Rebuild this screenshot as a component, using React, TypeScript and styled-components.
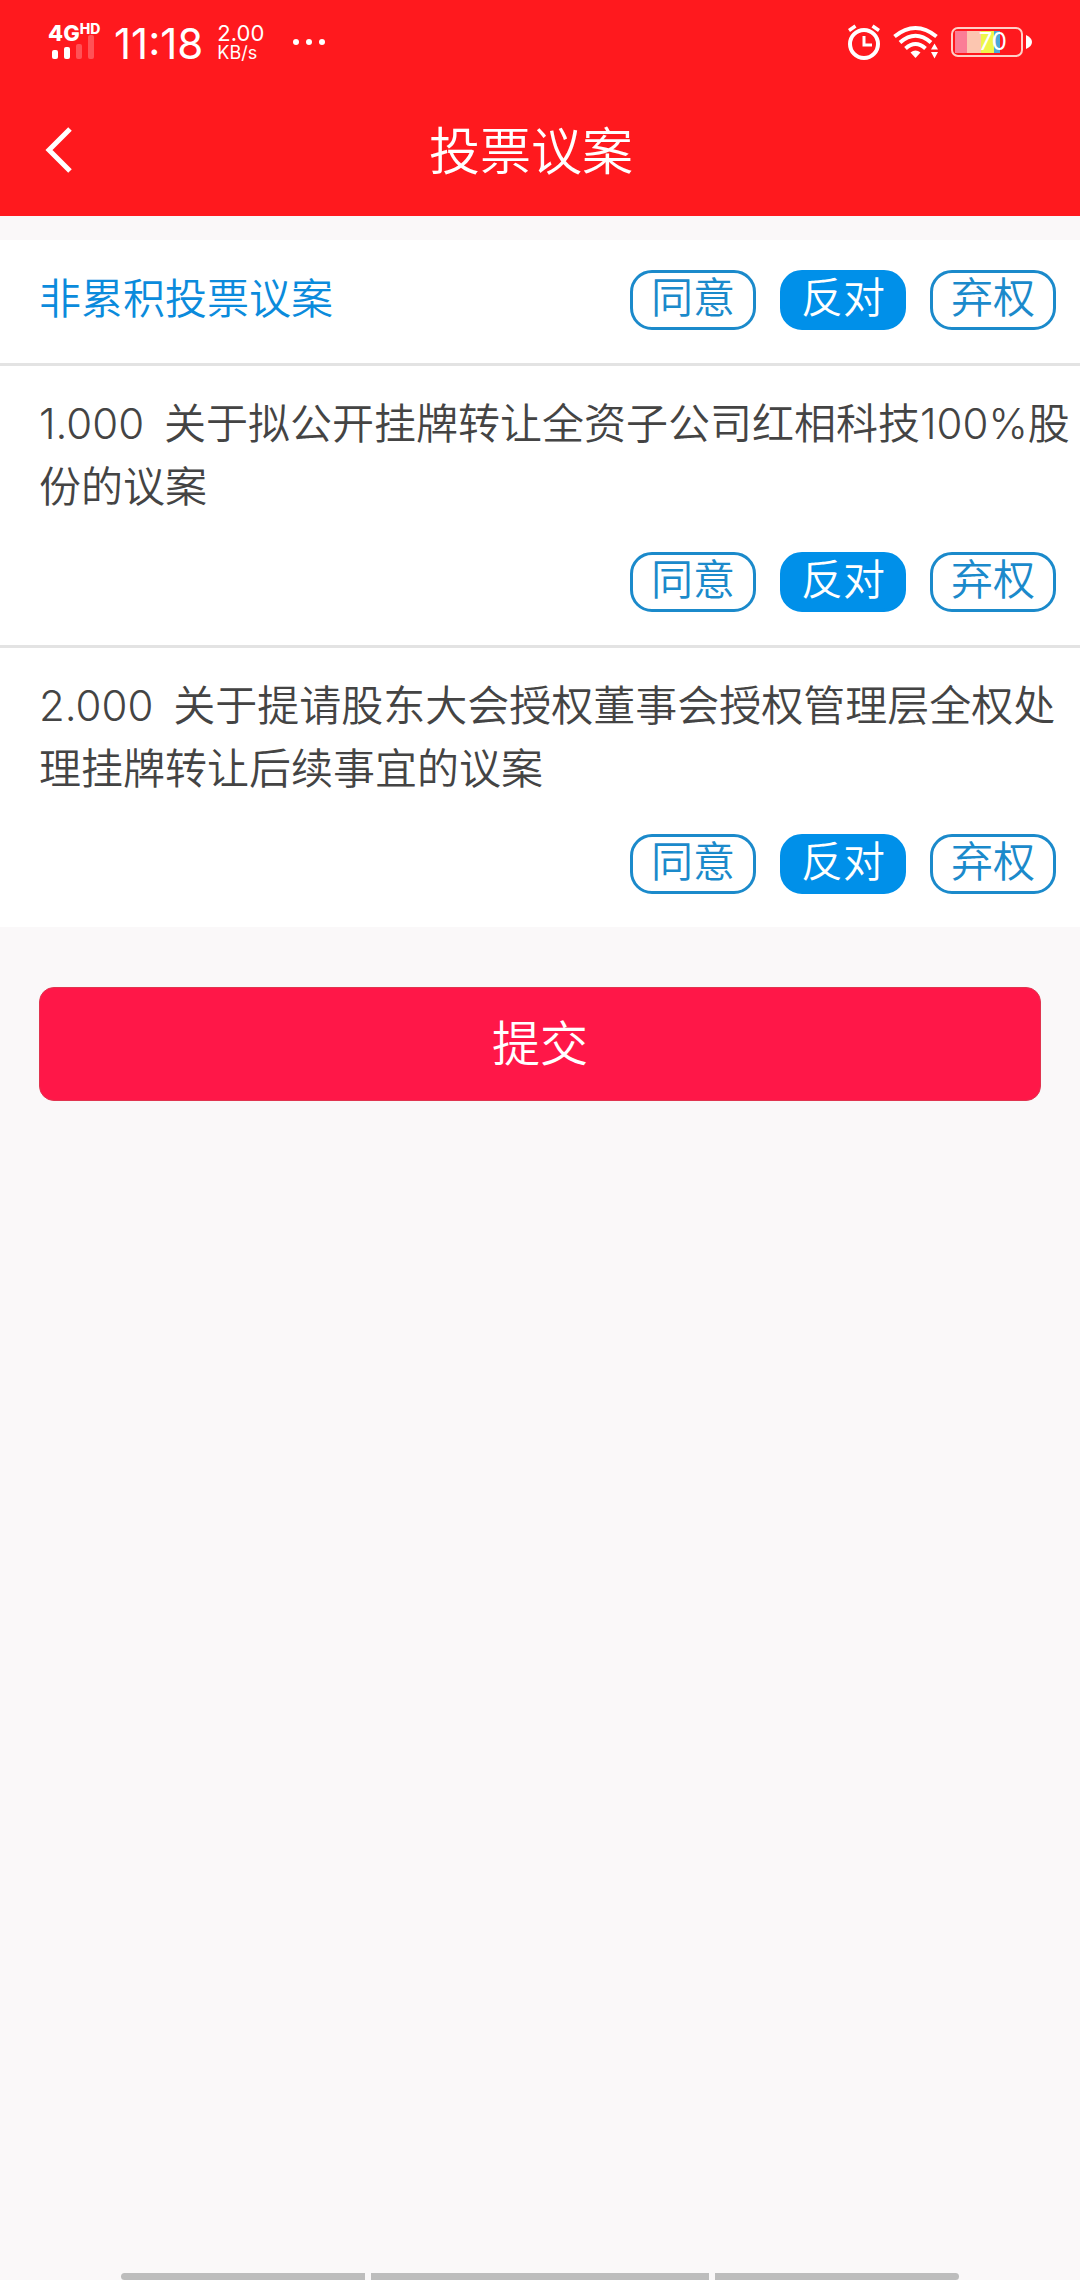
import React, { useState } from "react";
import styled, { createGlobalStyle } from "styled-components";

const GlobalStyle = createGlobalStyle`
  * { box-sizing: border-box; }
  body {
    margin: 0;
    background: #faf8f9;
    font-family: Inter, "Noto Sans CJK SC", sans-serif;
    font-weight: 350;
  }
  button { font: inherit; margin: 0; cursor: pointer; }
`;

const Page = styled.div`
  min-height: 100vh;
  display: flex;
  flex-direction: column;
`;

const Header = styled.header`
  background: #ff191e;
  color: #fff;
`;

const StatusBar = styled.div`
  height: 84px;
  padding: 0 48px;
  display: flex;
  align-items: center;
  justify-content: space-between;
`;

const StatusGroup = styled.div<{ $gap: number }>`
  display: flex;
  align-items: center;
  gap: ${(p) => p.$gap}px;
`;

const Signal = styled.div`
  display: grid;
  width: 52px;
  height: 36px;
  > * { grid-area: 1 / 1; }
`;

const Network = styled.div`
  display: flex;
  align-items: flex-start;
  font-size: 22px;
  line-height: 18px;
  font-weight: 800;
`;

const NetworkTag = styled.span`
  font-size: 14px;
  line-height: 10px;
`;

const SignalBars = styled.svg`
  align-self: end;
  margin-left: 4px;
`;

const Clock = styled.time`
  padding-top: 4px;
  font-size: 42px;
  line-height: 48px;
  font-weight: 400;
`;

const Speed = styled.div`
  display: flex;
  flex-direction: column;
  padding-top: 2px;
  font-size: 22px;
  line-height: 20px;
  font-weight: 400;
`;

const SpeedUnit = styled.span`
  font-size: 18px;
  line-height: 20px;
`;

const MoreDots = styled.svg`
  margin-left: 14px;
`;

const Battery = styled.div`
  display: flex;
  align-items: center;
  gap: 3px;
`;

const BatteryCell = styled.div`
  width: 72px;
  height: 30px;
  border: 2px solid #ffd0c8;
  border-radius: 7px;
  display: grid;
  align-items: center;
  > * { grid-area: 1 / 1; }
`;

const BatteryLevel = styled.div`
  width: 45px;
  height: 22px;
  margin-left: 2px;
  background: linear-gradient(
    to right,
    #fb7d96 0 12px,
    #fcc6b0 12px 26px,
    #eef64a 26px 39px,
    #4aa8d8 39px
  );
`;

const BatteryText = styled.span`
  padding-right: 14px;
  text-align: right;
  font-size: 24px;
  line-height: 24px;
  font-weight: 400;
`;

const TitleBar = styled.div`
  height: 132px;
  padding: 0 54px 0 36px;
  display: grid;
  grid-template-columns: 48px 1fr 48px;
  align-items: center;
`;

const BackButton = styled.button`
  display: flex;
  padding: 0;
  border: 0;
  background: none;
  color: inherit;
`;

const Title = styled.h1`
  margin: 0;
  padding-top: 3px;
  text-align: center;
  font-size: 51px;
  line-height: 66px;
  font-weight: 350;
`;

const List = styled.main`
  margin-top: 24px;
  background: #fff;
`;

const GroupRow = styled.section`
  display: flex;
  align-items: flex-start;
  justify-content: space-between;
  padding: 30px 24px 33px 39px;
`;

const GroupName = styled.h2`
  margin: 0;
  font-size: 42px;
  line-height: 57px;
  font-weight: 350;
  color: #0b8bdc;
`;

const Proposal = styled.section`
  padding: 26px 0 33px 39px;
  border-top: 3px solid #e3e3e3;
`;

const ProposalText = styled.p`
  margin: 0 0 34px;
  font-size: 42px;
  line-height: 63px;
  color: #444;
`;

const ProposalNumber = styled.span`
  margin-right: 8px;
`;

const Choices = styled.div`
  display: flex;
  justify-content: flex-end;
  gap: 24px;
`;

const ProposalChoices = styled(Choices)`
  padding-right: 24px;
`;

const Choice = styled.button<{ $on: boolean }>`
  width: 126px;
  height: 60px;
  padding: 0 0 4px;
  border: 3px solid ${(p) => (p.$on ? "#0090e9" : "#1b8acb")};
  border-radius: 22px;
  background: ${(p) => (p.$on ? "#0090e9" : "#fff")};
  color: ${(p) => (p.$on ? "#fff" : "#1b8acb")};
  font-size: 42px;
  line-height: 48px;
  white-space: nowrap;
`;

const Submit = styled.button`
  height: 114px;
  margin: 60px 39px;
  padding: 0;
  border: 1px solid #e0344f;
  border-radius: 15px;
  background: #ff1748;
  color: #fff;
  font-size: 48px;
  line-height: 66px;
`;

const GestureBar = styled.div`
  display: flex;
  gap: 6px;
  margin-top: auto;
  padding: 0 121px;
`;

const GestureSegment = styled.span<{ $grow: number; $radius?: string }>`
  flex: ${(p) => p.$grow} 1 0;
  height: 7px;
  background: #bdbdbd;
  border-radius: ${(p) => p.$radius ?? "0"};
`;

const OPTIONS = ["同意", "反对", "弃权"];

const PROPOSALS = [
  { number: "1.000", title: "关于拟公开挂牌转让全资子公司红相科技100%股份的议案" },
  { number: "2.000", title: "关于提请股东大会授权董事会授权管理层全权处理挂牌转让后续事宜的议案" },
];

function VoteButtons({ value, onPick }: { value: string; onPick: (v: string) => void }) {
  return (
    <>
      {OPTIONS.map((o) => (
        <Choice key={o} type="button" $on={o === value} aria-pressed={o === value} onClick={() => onPick(o)}>
          {o}
        </Choice>
      ))}
    </>
  );
}

const AlarmIcon = () => (
  <svg width="34" height="36" viewBox="0 0 34 36" fill="none" stroke="#fff">
    <circle cx="17" cy="20" r="14" strokeWidth="4" />
    <path d="M17 12v9h8" strokeWidth="3" />
    <path d="M2 6.5 8.500 2M32 6.500 25.500 2" strokeWidth="3.500" />
  </svg>
);

const WifiIcon = () => (
  <svg width="46" height="34" viewBox="0 0 46 34" fill="none" stroke="#fff" strokeWidth="4">
    <path d="M1.500 11.500Q22.500 -5.500 43.500 11.500" />
    <path d="M7 17.500Q22.500 4 38 17.500" />
    <path d="M12.500 23.500Q22.500 14.500 32.500 23.500" />
    <path d="M17.500 27.500Q22.500 23.500 27.500 27.500L22.500 33Z" fill="#fff" stroke="none" />
    <path d="M38 24.500 41.500 18.500 45 24.500ZM38 27 41.500 33.500 45 27Z" fill="#fff" stroke="none" />
  </svg>
);

export default function App() {
  const [votes, setVotes] = useState<string[]>(PROPOSALS.map(() => "反对"));
  const common = votes.every((v) => v === votes[0]) ? votes[0] : "";

  return (
    <>
      <GlobalStyle />
      <Page>
        <Header>
          <StatusBar>
            <StatusGroup $gap={14}>
              <Signal>
                <Network>
                  4G<NetworkTag>HD</NetworkTag>
                </Network>
                <SignalBars width="42" height="25" viewBox="0 0 42 25" fill="#fff">
                  <rect x="0" y="15" width="6" height="9" rx="2" />
                  <rect x="12" y="12" width="6" height="12" rx="2" />
                  <rect x="24" y="9" width="6" height="15" rx="2" opacity=".25" />
                  <rect x="36" y="0" width="6" height="24" rx="2" opacity=".25" />
                </SignalBars>
              </Signal>
              <Clock>11:18</Clock>
              <Speed>
                <span>2.00</span>
                <SpeedUnit>KB/s</SpeedUnit>
              </Speed>
              <MoreDots width="34" height="8" viewBox="0 0 34 8" fill="#fff">
                <circle cx="4" cy="4" r="3" />
                <circle cx="17" cy="4" r="3" />
                <circle cx="30" cy="4" r="3" />
              </MoreDots>
            </StatusGroup>
            <StatusGroup $gap={12}>
              <AlarmIcon />
              <WifiIcon />
              <Battery>
                <BatteryCell>
                  <BatteryLevel />
                  <BatteryText>70</BatteryText>
                </BatteryCell>
                <svg width="6" height="14" viewBox="0 0 6 14" fill="#fff">
                  <path d="M0 0C4 2 6 4 6 7S4 12 0 14Z" />
                </svg>
              </Battery>
            </StatusGroup>
          </StatusBar>
          <TitleBar>
            <BackButton type="button" aria-label="返回">
              <svg width="48" height="48" viewBox="0 0 48 48" fill="none" stroke="#fff" strokeWidth="5">
                <path d="M34 3 13 24 34 45" />
              </svg>
            </BackButton>
            <Title>投票议案</Title>
          </TitleBar>
        </Header>

        <List>
          <GroupRow>
            <GroupName>非累积投票议案</GroupName>
            <Choices>
              <VoteButtons value={common} onPick={(v) => setVotes(PROPOSALS.map(() => v))} />
            </Choices>
          </GroupRow>
          {PROPOSALS.map(({ number, title }, i) => (
            <Proposal key={number}>
              <ProposalText>
                <ProposalNumber>{number}</ProposalNumber> {title}
              </ProposalText>
              <ProposalChoices>
                <VoteButtons
                  value={votes[i]}
                  onPick={(v) => setVotes(votes.map((old, j) => (j === i ? v : old)))}
                />
              </ProposalChoices>
            </Proposal>
          ))}
        </List>

        <Submit type="button">提交</Submit>

        <GestureBar>
          <GestureSegment $grow={244} $radius="4px 0 0 4px" />
          <GestureSegment $grow={338} />
          <GestureSegment $grow={244} $radius="0 4px 4px 0" />
        </GestureBar>
      </Page>
    </>
  );
}
